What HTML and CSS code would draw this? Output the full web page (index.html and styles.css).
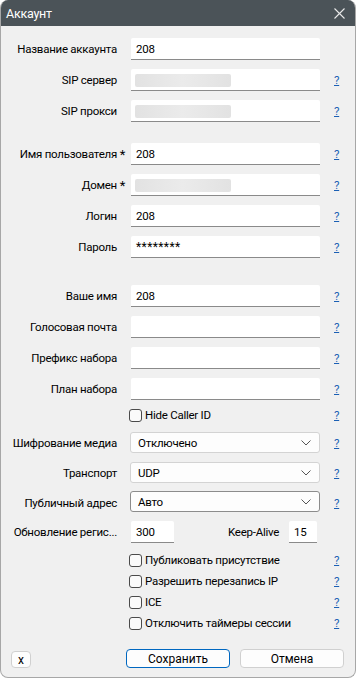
FILE: index.html
```html
<!DOCTYPE html>
<html lang="ru">
<head>
    <meta charset="UTF-8">
    <meta name="viewport" content="width=device-width, initial-scale=1.0">
    <title>Аккаунт</title>
    <link rel="stylesheet" href="styles.css">
</head>
<body>
    <div class="window">
        <div class="titlebar">
            <span class="title">Аккаунт</span>
            <svg class="close" width="11" height="11" viewBox="0 0 11 11">
                <path d="M0.5 0.5 L10.5 10.5 M10.5 0.5 L0.5 10.5" stroke="#e8e8e8" stroke-width="1.1" fill="none"/>
            </svg>
        </div>

        <div class="form">
            <!-- сервер -->
            <div class="group g1">
                <div class="row">
                    <label>Название аккаунта</label>
                    <div class="field">208</div>
                    <span></span>
                </div>
                <div class="row">
                    <label>SIP сервер</label>
                    <div class="field"><span class="masked"></span></div>
                    <a class="help" href="#">?</a>
                </div>
                <div class="row">
                    <label>SIP прокси</label>
                    <div class="field"><span class="masked"></span></div>
                    <a class="help" href="#">?</a>
                </div>
            </div>

            <!-- учётные данные -->
            <div class="group g2">
                <div class="row">
                    <label>Имя пользователя<i class="req">*</i></label>
                    <div class="field">208</div>
                    <a class="help" href="#">?</a>
                </div>
                <div class="row">
                    <label>Домен<i class="req">*</i></label>
                    <div class="field"><span class="masked"></span></div>
                    <a class="help" href="#">?</a>
                </div>
                <div class="row">
                    <label>Логин</label>
                    <div class="field">208</div>
                    <a class="help" href="#">?</a>
                </div>
                <div class="row">
                    <label>Пароль</label>
                    <div class="field pass">********</div>
                    <a class="help" href="#">?</a>
                </div>
            </div>

            <!-- прочее -->
            <div class="group g3">
                <div class="row">
                    <label>Ваше имя</label>
                    <div class="field">208</div>
                    <a class="help" href="#">?</a>
                </div>
                <div class="row">
                    <label>Голосовая почта</label>
                    <div class="field"></div>
                    <a class="help" href="#">?</a>
                </div>
                <div class="row">
                    <label>Префикс набора</label>
                    <div class="field"></div>
                    <a class="help" href="#">?</a>
                </div>
                <div class="row">
                    <label>План набора</label>
                    <div class="field"></div>
                    <a class="help" href="#">?</a>
                </div>
                <div class="row check-row first-check">
                    <span></span>
                    <div class="check"><span class="box"></span>Hide Caller ID</div>
                    <a class="help" href="#">?</a>
                </div>
                <div class="row sel-row first-sel">
                    <label>Шифрование медиа</label>
                    <div class="select">Отключено<svg class="chev" width="10" height="6" viewBox="0 0 10 6"><path d="M0.5 0.5 L5 5 L9.5 0.5" stroke="#555" fill="none"/></svg></div>
                    <a class="help" href="#">?</a>
                </div>
                <div class="row sel-row">
                    <label>Транспорт</label>
                    <div class="select">UDP<svg class="chev" width="10" height="6" viewBox="0 0 10 6"><path d="M0.5 0.5 L5 5 L9.5 0.5" stroke="#555" fill="none"/></svg></div>
                    <a class="help" href="#">?</a>
                </div>
                <div class="row sel-row">
                    <label>Публичный адрес</label>
                    <div class="select hover">Авто<svg class="chev" width="10" height="6" viewBox="0 0 10 6"><path d="M0.5 0.5 L5 5 L9.5 0.5" stroke="#555" fill="none"/></svg></div>
                    <a class="help" href="#">?</a>
                </div>
                <div class="row timers">
                    <label>Обновление регис...</label>
                    <div class="timer-fields">
                        <div class="field small">300</div>
                        <span class="ka-label">Keep-Alive</span>
                        <div class="field tiny">15</div>
                    </div>
                    <span></span>
                </div>
            </div>

            <div class="group g4">
                <div class="row check-row">
                    <span></span>
                    <div class="check"><span class="box"></span>Публиковать присутствие</div>
                    <a class="help" href="#">?</a>
                </div>
                <div class="row check-row">
                    <span></span>
                    <div class="check"><span class="box"></span>Разрешить перезапись IP</div>
                    <a class="help" href="#">?</a>
                </div>
                <div class="row check-row">
                    <span></span>
                    <div class="check"><span class="box"></span>ICE</div>
                    <a class="help" href="#">?</a>
                </div>
                <div class="row check-row">
                    <span></span>
                    <div class="check"><span class="box"></span>Отключить таймеры сессии</div>
                    <a class="help" href="#">?</a>
                </div>
            </div>
        </div>

        <div class="footer">
            <button class="btn btn-x">x</button>
            <div class="actions">
                <button class="btn btn-default">Сохранить</button>
                <button class="btn">Отмена</button>
            </div>
        </div>
    </div>
</body>
</html>
```

FILE: styles.css
```css
html, body {
    margin: 0;
    padding: 0;
    background: #ffffff;
}
body {
    font-family: Roboto, "Noto Sans", sans-serif;
    font-size: 11.5px;
    letter-spacing: -0.25px;
    color: #000;
}
.window {
    width: 354px;
    height: 677px;
    background: #f0f0f0;
    border: 1px solid #a7a7a7;
    border-top: none;
    border-radius: 8px;
    overflow: hidden;
    display: flex;
    flex-direction: column;
}
.titlebar {
    height: 26px;
    background: #4b5358;
    display: flex;
    align-items: center;
    justify-content: space-between;
    padding: 0 10px 0 5px;
    flex-shrink: 0;
}
.title {
    color: #fff;
    font-size: 12.5px;
}
.close {
    margin-top: 1px;
}
.form {
    display: flex;
    flex-direction: column;
    padding-top: 12px;
}
.group {
    display: flex;
    flex-direction: column;
    gap: 9px;
}
.g2 {
    margin-top: 21px;
}
.g3 {
    margin-top: 27px;
}
.g4 {
    margin-top: 10px;
    gap: 8px;
}
.row {
    display: grid;
    grid-template-columns: 109px 189px 30px;
    column-gap: 14px;
    padding-left: 7px;
    height: 22px;
    align-items: center;
}
.row label {
    text-align: right;
    white-space: nowrap;
    position: relative;
}
.req {
    font-style: normal;
    position: absolute;
    right: -8px;
    top: 0;
    font-size: 13px;
}
.field {
    height: 22px;
    box-sizing: border-box;
    background: #fff;
    border-bottom: 1px solid #8a8a8a;
    border-radius: 2px 2px 0 0;
    padding: 2px 5px 0;
    line-height: 18px;
    display: flex;
    align-items: flex-start;
}
.pass {
    letter-spacing: 0.4px;
    font-size: 12px;
}
.masked {
    display: block;
    width: 96px;
    height: 13px;
    margin-top: 3px;
    margin-left: -1px;
    background: linear-gradient(90deg, #e2e2e2, #ebebeb 50%, #e2e2e2);
    border-radius: 2px;
    filter: blur(0.6px);
}
.help {
    color: #1a5fb4;
    text-decoration: underline;
    padding-left: 0;
    justify-self: start;
}
.check-row {
    height: 13px;
}
.first-check {
    margin-top: -1px;
}
.check {
    display: flex;
    align-items: center;
    gap: 3px;
    margin-left: -2px;
    white-space: nowrap;
}
.box {
    width: 11px;
    height: 11px;
    border: 1px solid #4a4a4a;
    border-radius: 3px;
    background: #fafafa;
}
.sel-row {
    height: 21px;
}
.first-sel {
    margin-top: 2px;
}
.select {
    height: 21px;
    box-sizing: border-box;
    background: #fdfdfd;
    border: 1px solid #d3d3d3;
    border-radius: 3px;
    padding: 0 8px 0 7px;
    display: flex;
    align-items: center;
    justify-content: space-between;
    margin-left: -1px;
}
.select.hover {
    border-color: #8c8c8c;
    margin-top: -2px;
}
.timers {
    margin-top: -1px;
}
.timer-fields {
    display: flex;
    align-items: center;
    white-space: nowrap;
}
.small {
    width: 43px;
    flex-shrink: 0;
}
.tiny {
    width: 28px;
    flex-shrink: 0;
}
.ka-label {
    margin-left: 54px;
    margin-right: 10px;
}
.footer {
    margin-top: auto;
    margin-bottom: 9px;
    display: flex;
    align-items: flex-end;
    padding: 0 11px 0 10px;
    justify-content: space-between;
}
.btn {
    font-family: inherit;
    font-size: 12px;
    background: #fdfdfd;
    border: 1px solid #d0d0d0;
    border-radius: 4px;
    color: #000;
    height: 19px;
    padding: 0;
    width: 104px;
}
.btn-x {
    width: 20px;
    height: 17px;
    line-height: 12px;
}
.btn-default {
    border-color: #0067c0;
}
.actions {
    display: flex;
    gap: 10px;
}
```
